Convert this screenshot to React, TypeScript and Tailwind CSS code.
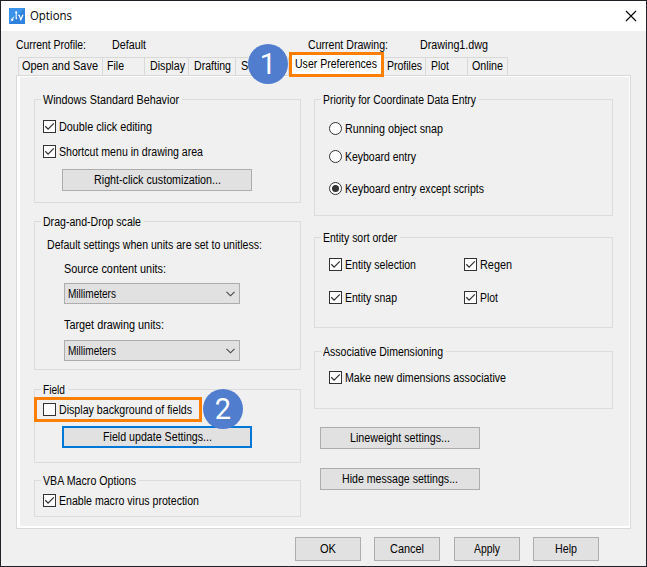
import { useLayoutEffect, useRef } from "react";
import type { ReactNode } from "react";

/** One line of dialog text, condensed to the width given by its class. */
function T({ w, children, className = "" }: { w: string; children: string; className?: string }) {
  const outer = useRef<HTMLSpanElement>(null);
  const inner = useRef<HTMLSpanElement>(null);
  useLayoutEffect(() => {
    const o = outer.current;
    const i = inner.current;
    if (!o || !i) return;
    i.style.transform = "none";
    const natural = i.getBoundingClientRect().width;
    i.style.transform = `scaleX(${o.getBoundingClientRect().width / natural})`;
  }, [children]);
  return (
    <span ref={outer} className={`block h-4 shrink-0 leading-4 ${w} ${className}`}>
      <span ref={inner} className="inline-block origin-left whitespace-nowrap">
        {children}
      </span>
    </span>
  );
}

function Group({ title, w, className, children }: { title: string; w: string; className: string; children: ReactNode }) {
  return (
    <section className={`flex flex-col items-start border border-[#dcdcdc] ${className}`}>
      <div className="-mt-2 ml-1.5 h-4 bg-[#f0f0f0] pr-[3px] pl-[2px]">
        <T w={w}>{title}</T>
      </div>
      {children}
    </section>
  );
}

function Check({ label, w, checked = true, className = "" }: { label: string; w: string; checked?: boolean; className?: string }) {
  return (
    <label className={`flex h-[13px] items-center ${className}`}>
      <span className="block size-[13px] shrink-0 border border-[#333] bg-white">
        {checked && (
          <svg viewBox="0 0 11 11" className="block size-[11px]" fill="none" stroke="#333" strokeWidth="1.3">
            <path d="M1.3 5.3 4.1 8.1 9.8 2.4" />
          </svg>
        )}
      </span>
      <T w={w} className="ml-[3px]">{label}</T>
    </label>
  );
}

function Radio({ label, w, checked = false, className = "" }: { label: string; w: string; checked?: boolean; className?: string }) {
  return (
    <label className={`flex h-[13px] items-center ${className}`}>
      <span className="flex size-[13px] shrink-0 items-center justify-center rounded-full border border-[#333] bg-white">
        {checked && <span className="size-[7px] rounded-full bg-[#333]" />}
      </span>
      <T w={w} className="ml-[3px]">{label}</T>
    </label>
  );
}

function Button({ label, w, className }: { label: string; w: string; className: string }) {
  return (
    <button type="button" className={`flex items-center justify-center bg-[#e1e1e1] ${className}`}>
      <T w={w} className="text-left">{label}</T>
    </button>
  );
}

function Select({ className }: { className: string }) {
  return (
    <div className={`flex h-[21px] w-44 items-center justify-between border border-[#adadad] bg-[#e1e1e1] pr-1 pl-[3px] ${className}`}>
      <T w="w-[48px]">Millimeters</T>
      <svg viewBox="0 0 9 6" className="h-1.5 w-[9px]" fill="none" stroke="#444" strokeWidth="1.1">
        <path d="M.5.8 4.5 4.8 8.5.8" />
      </svg>
    </div>
  );
}

function Tab({ label, w, className }: { label: string; w: string; className: string }) {
  return (
    <div className={`h-[18px] shrink-0 border-t border-r border-[#d9d9d9] ${className}`}>
      <T w={w}>{label}</T>
    </div>
  );
}

function Step({ n, className }: { n: string; className: string }) {
  return (
    <div className={`absolute flex size-10 items-center justify-center rounded-full bg-[#507dcd] pt-px font-['Roboto',sans-serif] text-[29px] leading-none text-white ${className}`}>
      {n}
    </div>
  );
}

export default function App() {
  return (
    <div className="relative flex h-[567px] w-[647px] flex-col overflow-hidden border border-[#202026] bg-[#f0f0f0] font-['Liberation_Sans',Arial,sans-serif] text-[12px] text-black">
      <header className="flex h-[30px] shrink-0 items-center bg-white pl-2">
        <svg viewBox="0 0 16 16" className="size-4" fill="none">
          <rect width="16" height="16" fill="#2f82dc" />
          <path d="M0 0h16L0 16z" fill="#3b93ea" />
          <path d="M3.2 11.6 4.6 8.8M7.2 4.4V10.4" stroke="#fff" strokeWidth="1" />
          <path d="M9.2 7.4h1l1.6 4.2L14 6.8" stroke="#fff" strokeWidth="1.2" />
          <circle cx="3.2" cy="11.8" r="1.2" fill="#fff" />
          <circle cx="7.2" cy="4.4" r="1.1" fill="#fff" />
          <circle cx="7.4" cy="10.4" r=".8" fill="#fff" />
        </svg>
        <T w="w-[42px]" className="ml-[5px] font-['Open_Sans','Noto_Sans',sans-serif]">Options</T>
        <svg viewBox="0 0 12 12" className="mr-[9px] ml-auto size-3" fill="none" stroke="#000" strokeWidth="1.1">
          <path d="M1 1l10 10M11 1 1 11" />
        </svg>
      </header>

      <div className="mt-1.5 flex h-4 shrink-0 pl-[14.5px]">
        <T w="w-[70px]">Current Profile:</T>
        <T w="w-[34px]" className="ml-[26.5px]">Default</T>
        <T w="w-[80px]" className="ml-[162px]">Current Drawing:</T>
        <T w="w-[68px]" className="ml-[32px]">Drawing1.dwg</T>
      </div>

      <nav className="mt-1 ml-[17px] flex h-[18px] w-[490px] shrink-0 border-l border-[#d9d9d9]">
        <Tab label="Open and Save" w="w-[76px]" className="w-[84px] pl-[3px]" />
        <Tab label="File" w="w-[17px]" className="w-[42px] pl-[4px]" />
        <Tab label="Display" w="w-[35px]" className="w-[44px] pl-[5px]" />
        <Tab label="Drafting" w="w-[37px]" className="w-[47px] pl-[5px]" />
        <Tab label="Selection" w="w-[45px]" className="w-[53px] pl-[5px]" />
        <div className="z-10 -mt-[5px] -mr-px h-[25px] w-[95px] shrink-0 border-3 border-[#ff8000] bg-white pt-px pl-[3px]">
          <T w="w-[82px]">User Preferences</T>
        </div>
        <Tab label="Profiles" w="w-[35px]" className="w-[43px] pl-[4px]" />
        <Tab label="Plot" w="w-[18px]" className="w-[42px] pl-[5px]" />
        <Tab label="Online" w="w-[31px]" className="w-[40px] pl-[4px]" />
      </nav>

      <main className="ml-[15px] flex h-[454px] w-[615px] shrink-0 border border-[#d9d9d9] bg-white pt-px pr-px pb-[2px] pl-[3px]">
        <div className="flex h-full w-full gap-[13px] bg-[#f0f0f0] pt-[22px] pl-3.5">
          <div className="flex w-[267px] flex-col">
            <Group title="Windows Standard Behavior" w="w-[136px]" className="h-[104px]">
              <Check label="Double click editing" w="w-[93px]" className="mt-3 ml-2" />
              <Check label="Shortcut menu in drawing area" w="w-[144px]" className="mt-3 ml-2" />
              <Button label="Right-click customization..." w="w-[127px]" className="mt-[11px] ml-[27px] h-[22px] w-[190px] border border-[#adadad]" />
            </Group>
            <Group title="Drag-and-Drop scale" w="w-[98px]" className="mt-[18px] h-[149px]">
              <T w="w-[215px]" className="mt-[7px] ml-[12px]">Default settings when units are set to unitless:</T>
              <T w="w-[102px]" className="mt-2 ml-[29px]">Source content units:</T>
              <Select className="mt-[6px] ml-[29px]" />
              <T w="w-[100px]" className="mt-[13px] ml-[29px]">Target drawing units:</T>
              <Select className="mt-[7px] ml-[29px]" />
            </Group>
            <Group title="Field" w="w-[22px]" className="mt-[19px] h-[74px]">
              <div className="-mt-px -ml-px flex h-[25px] w-[168px] items-center border-3 border-[#ff8000] pl-[6px]">
                <Check label="Display background of fields" w="w-[133px]" checked={false} />
              </div>
              <Button label="Field update Settings..." w="w-[109px]" className="mt-1 ml-[27px] h-[22px] w-[190px] border-2 border-[#0078d7]" />
            </Group>
            <Group title="VBA Macro Options" w="w-[93px]" className="mt-[17px] h-[37px]">
              <Check label="Enable macro virus protection" w="w-[140px]" className="mt-[5px] ml-2" />
            </Group>
          </div>

          <div className="flex w-[299px] flex-col items-start">
            <Group title="Priority for Coordinate Data Entry" w="w-[153px]" className="h-[117px] w-full">
              <Radio label="Running object snap" w="w-[98px]" className="mt-3.5 ml-3.5" />
              <Radio label="Keyboard entry" w="w-[71px]" className="mt-[15px] ml-3.5" />
              <Radio label="Keyboard entry except scripts" w="w-[139px]" checked className="mt-[19px] ml-3.5" />
            </Group>
            <Group title="Entity sort order" w="w-[74px]" className="mt-[21px] h-[91px] w-full">
              <div className="mt-3 ml-3.5 flex">
                <Check label="Entity selection" w="w-[71px]" className="w-[135px]" />
                <Check label="Regen" w="w-[32px]" />
              </div>
              <div className="mt-5 ml-3.5 flex">
                <Check label="Entity snap" w="w-[52px]" className="w-[135px]" />
                <Check label="Plot" w="w-[18px]" />
              </div>
            </Group>
            <Group title="Associative Dimensioning" w="w-[120px]" className="mt-[23px] h-[58px] w-full">
              <Check label="Make new dimensions associative" w="w-[161px]" className="mt-[11px] ml-3.5" />
            </Group>
            <Button label="Lineweight settings..." w="w-[100px]" className="mt-[18px] ml-1.5 h-[22px] w-40 border border-[#adadad]" />
            <Button label="Hide message settings..." w="w-[116px]" className="mt-[19px] ml-1.5 h-[22px] w-40 border border-[#adadad]" />
          </div>
        </div>
      </main>

      <footer className="mt-2 ml-[294px] flex shrink-0">
        <Button label="OK" w="w-[16px]" className="h-6 w-[66px] border border-[#adadad]" />
        <Button label="Cancel" w="w-[34px]" className="ml-[13px] h-6 w-[66px] border border-[#adadad]" />
        <Button label="Apply" w="w-[26px]" className="ml-[14px] h-6 w-[66px] border border-[#adadad]" />
        <Button label="Help" w="w-[22px]" className="ml-[13px] h-6 w-[66px] border border-[#adadad]" />
      </footer>

      <Step n="1" className="top-[43px] left-[247px]" />
      <Step n="2" className="top-[388px] left-[202px]" />
    </div>
  );
}
